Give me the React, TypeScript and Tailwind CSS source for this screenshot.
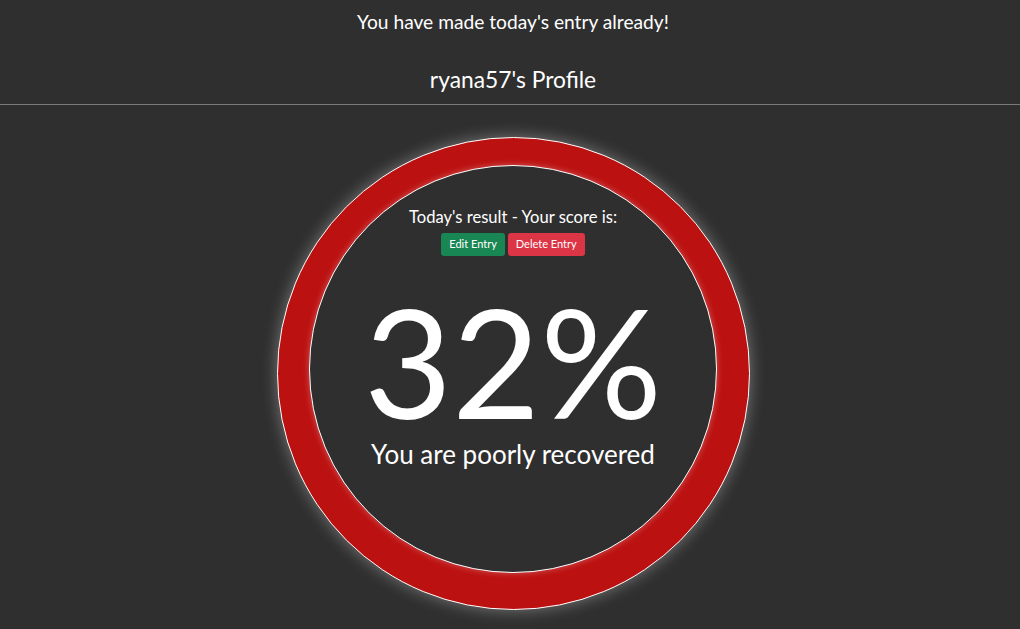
export default function App() {
  return (
    <div className="min-h-screen w-full bg-[#2f2f2f] pl-[6px] text-white" style={{ fontFamily: "Lato, 'Open Sans', sans-serif" }}>
      <div className="flex flex-col items-center">
        <p className="pt-[9px] text-[19.2px] leading-[26px]">You have made today's entry already!</p>
        <h2 className="mt-[30px] text-[22.8px] leading-[28px]">ryana57's Profile</h2>
      </div>
      <div className="ml-[-6px] mt-[11px] h-px bg-[#7a7a7a]" />
      <div className="flex justify-center pt-[32px]">
        <div className="flex h-[473px] w-[473px] items-center justify-center rounded-full border border-white bg-[#bc1111] pb-[9px] shadow-[0_0_16px_rgba(255,255,255,0.35)]">
          <div className="flex h-[408px] w-[408px] flex-col items-center rounded-full border border-white bg-[#2f2f2f] shadow-[0_0_6px_rgba(255,255,255,0.3)]">
            <p className="mt-[39px] text-[16.6px] leading-[24px]">Today's result - Your score is:</p>
            <div className="mt-[4px] flex gap-[3px]">
              <button className="h-[23px] rounded-[3px] bg-[#198754] px-[8px] text-[11px] text-white">Edit Entry</button>
              <button className="h-[23px] rounded-[3px] bg-[#dc3545] px-[8px] text-[11px] text-white">Delete Entry</button>
            </div>
            <div className="mt-[44px] text-[152px] font-normal leading-[120px]">32%</div>
            <div className="mt-[17px] text-[26px] leading-[34px]">You are poorly recovered</div>
          </div>
        </div>
      </div>
    </div>
  );
}
